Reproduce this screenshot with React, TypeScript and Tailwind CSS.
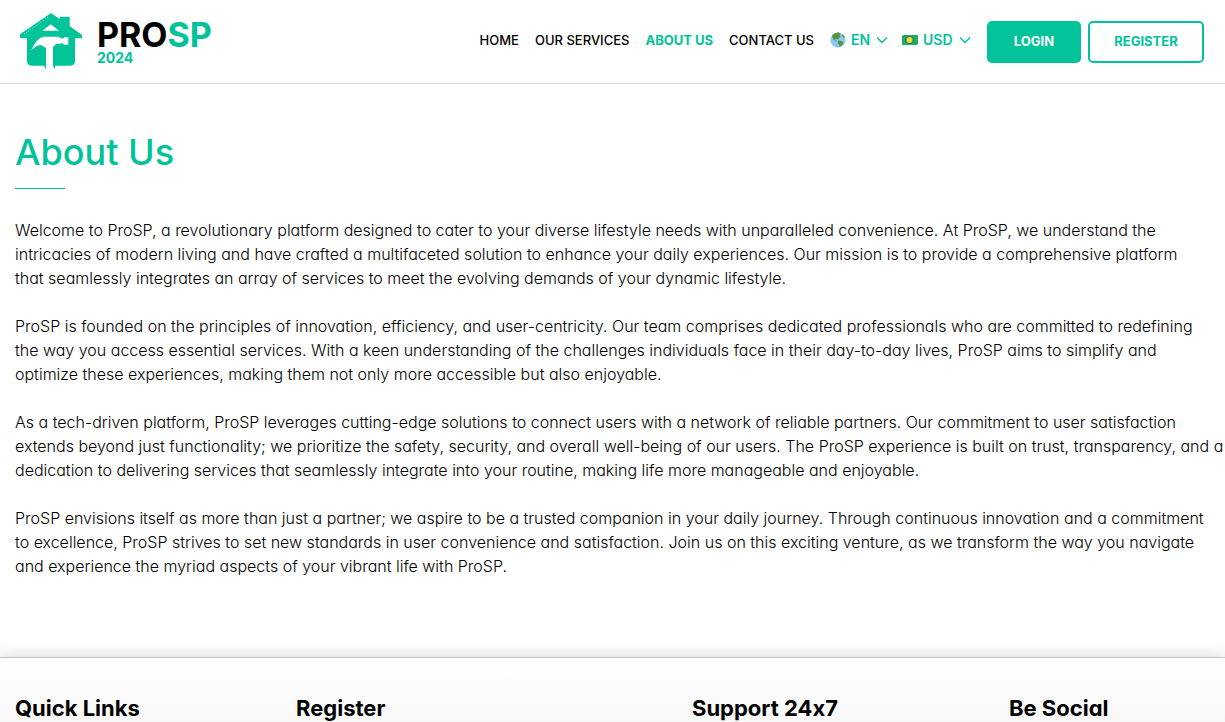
import type { ReactNode } from 'react'

const navLinks = [
  { label: 'HOME', href: '#home' },
  { label: 'OUR SERVICES', href: '#services' },
  { label: 'ABOUT US', href: '#about', active: true },
  { label: 'CONTACT US', href: '#contact' },
]

const paragraphs = [
  [
    'Welcome to ProSP, a revolutionary platform designed to cater to your diverse lifestyle needs with unparalleled convenience. At ProSP, we understand the',
    'intricacies of modern living and have crafted a multifaceted solution to enhance your daily experiences. Our mission is to provide a comprehensive platform',
    'that seamlessly integrates an array of services to meet the evolving demands of your dynamic lifestyle.',
  ],
  [
    'ProSP is founded on the principles of innovation, efficiency, and user-centricity. Our team comprises dedicated professionals who are committed to redefining',
    'the way you access essential services. With a keen understanding of the challenges individuals face in their day-to-day lives, ProSP aims to simplify and',
    'optimize these experiences, making them not only more accessible but also enjoyable.',
  ],
  [
    'As a tech-driven platform, ProSP leverages cutting-edge solutions to connect users with a network of reliable partners. Our commitment to user satisfaction',
    'extends beyond just functionality; we prioritize the safety, security, and overall well-being of our users. The ProSP experience is built on trust, transparency, and a',
    'dedication to delivering services that seamlessly integrate into your routine, making life more manageable and enjoyable.',
  ],
  [
    'ProSP envisions itself as more than just a partner; we aspire to be a trusted companion in your daily journey. Through continuous innovation and a commitment',
    'to excellence, ProSP strives to set new standards in user convenience and satisfaction. Join us on this exciting venture, as we transform the way you navigate',
    'and experience the myriad aspects of your vibrant life with ProSP.',
  ],
]

const footerTitles = ['Quick Links', 'Register', 'Support 24x7', 'Be Social']

function HouseMark() {
  return (
    <svg viewBox="15 16 189 171" className="h-[57px] w-[63px]" aria-hidden="true">
      <path
        d="M15 91V80L105 18Q108 16 111 18L134 34V27H164V55L201 82V92H180V160Q180 174 166 174H121L119 185L114 174V118L123 109H133L140 106L149 111H160V89H149L141 93L130 87H85Q65 91 49 127Q63 114 76 111L93 121V174L92 186L87 174H51Q36 174 36 160V92Z"
        fill="#00c39a"
      />
      <path d="M107 50L132 69H82Z" fill="#fff" />
      <path d="M28 79L101 27" stroke="#fff" strokeWidth="2" strokeDasharray="3 4" />
    </svg>
  )
}

function Globe() {
  return (
    <svg viewBox="0 0 16 16" className="size-4" aria-hidden="true">
      <circle cx="8" cy="8" r="7.6" fill="#88c9f9" />
      <path d="M2 3.5Q5 .2 9 .6L10.4 2 9.3 3.5 11 4.5 9.3 5.8 8 7.5 6 6.5 5 8 7 9 6.3 9.6 3.5 7.8 2.3 5Z" fill="#5c913b" />
      <path d="M8.3 8.5L11.5 9 13.5 10.5 12 13 9.5 15 8.8 12.7 7.6 10.4ZM12 2L14.6 4.3 13.7 6 12.3 4Z" fill="#5c913b" />
    </svg>
  )
}

function Cash() {
  return (
    <svg viewBox="0 0 16 10" className="h-[10px] w-4" aria-hidden="true">
      <path d="M2 0H16V7.5Q16 10 13.5 10H0V2Q0 0 2 0Z" fill="#1fae63" />
      <path d="M0 3L3 0M13 10L16 7" stroke="#128a4c" strokeWidth="1" />
      <ellipse cx="7.5" cy="5" rx="4.5" ry="4" fill="#128a4c" />
      <circle cx="7.5" cy="5" r="3" fill="#ffd23d" />
    </svg>
  )
}

function Picker({ label, value, icon, width }: { label: string; value: string; icon: ReactNode; width: string }) {
  return (
    <label className="flex items-center gap-[5px] text-[#00c39a]">
      {icon}
      <select
        aria-label={label}
        defaultValue={value}
        className={`${width} cursor-pointer appearance-none bg-transparent text-sm leading-6 font-semibold outline-none`}
      >
        <option>{value}</option>
      </select>
      <svg viewBox="0 0 12 8" className="h-2 w-3" fill="none" stroke="currentColor" strokeWidth="1.4" aria-hidden="true">
        <path d="M1 1.5L6 6.5L11 1.5" />
      </svg>
    </label>
  )
}

function Header() {
  return (
    <header className="flex h-[84px] items-center justify-between border-b border-[#dcdcdc] pr-[21px] pl-5">
      <a href="#home" className="flex items-center gap-[14px]">
        <HouseMark />
        <span className="flex flex-col">
          <span className="text-[34px] leading-8 font-bold text-black">
            PRO<span className="text-[#00c39a]">SP</span>
          </span>
          <span className="text-sm leading-[14px] font-bold text-[#00c39a]">2024</span>
        </span>
      </a>
      <div className="flex items-center gap-4">
        <nav className="flex items-center gap-4 pb-1 text-[13px] leading-6 font-medium whitespace-nowrap text-black">
          {navLinks.map((link) => (
            <a key={link.label} href={link.href} className={link.active ? 'font-bold text-[#00c39a]' : ''}>
              {link.label}
            </a>
          ))}
          <div className="flex items-center gap-[14px]">
            <Picker label="Language" value="EN" icon={<Globe />} width="w-5" />
            <Picker label="Currency" value="USD" icon={<Cash />} width="w-[31px]" />
          </div>
        </nav>
        <div className="flex gap-[7px] text-[13px] font-bold">
          <button className="h-[42px] w-[94px] rounded-[5px] bg-[#00c39a] text-white">LOGIN</button>
          <button className="h-[42px] w-[116px] rounded-[5px] border-2 border-[#00c39a] text-[#00c39a]">REGISTER</button>
        </div>
      </div>
    </header>
  )
}

export default function App() {
  return (
    <div className="flex min-h-screen flex-col bg-white font-['Inter',sans-serif] text-black [font-feature-settings:'cv11','calt'_0]">
      <Header />
      <main className="px-[15px] pt-10 pb-[79px]">
        <h1 className="text-[36px] leading-[56px] font-medium text-[#00c39a]">About Us</h1>
        <div className="mt-2 h-px w-[50px] bg-[#00c39a]" />
        <div className="mt-[29px] flex flex-col gap-6">
          {paragraphs.map((lines) => (
            <p key={lines[0]} className="text-base leading-6 font-light">
              {lines.map((line) => (
                <span key={line} className="block whitespace-nowrap">
                  {line}
                </span>
              ))}
            </p>
          ))}
        </div>
      </main>
      <footer className="grid flex-1 grid-cols-[281fr_396fr_317fr_201fr] border-t border-[#c4c4c4] bg-linear-to-b from-white to-[#f8f8f8] px-[15px] pt-9 shadow-[0_0_16px_rgba(0,0,0,0.18)]">
        {footerTitles.map((title) => (
          <h2 key={title} className="text-[22px] leading-7 font-bold">
            {title}
          </h2>
        ))}
      </footer>
    </div>
  )
}
